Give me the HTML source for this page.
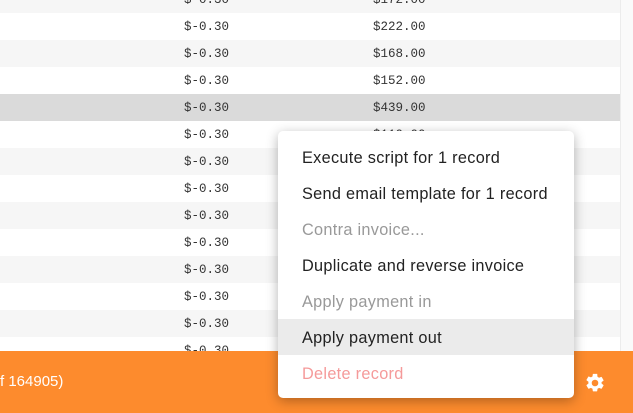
<!DOCTYPE html>
<html><head><style>
body{margin:0;width:633px;height:413px;overflow:hidden;position:relative;background:#fff;font-family:"Liberation Sans",sans-serif}
.strip{position:absolute;left:620px;top:0;width:13px;height:351px;background:#fafafa;border-left:1px solid #ececec}
.row{position:absolute;left:0;width:620px;height:27px;font-family:"Liberation Mono",monospace;font-size:12.5px;color:#333;line-height:29px}
.row span{position:absolute}
.a{left:184px}.b{left:373px}
.bar{position:absolute;left:0;top:351px;width:633px;height:62px;background:#fd8b2d;color:#fff;font-size:15px}
.menu{position:absolute;left:278px;top:131px;width:296px;height:267px;background:#fff;border-radius:5px;box-shadow:0 3px 12px rgba(0,0,0,.3)}
.it{position:absolute;left:0;width:296px;height:36px;line-height:38px;padding-left:24px;box-sizing:border-box;font-size:16.3px;letter-spacing:.3px;color:#222}
.dis{color:#999}
</style></head><body>
<div class="strip"></div>
<div class="row" style="top:-14px;background:#f6f6f6"><span class="a">$-0.30</span><span class="b">$172.00</span></div>
<div class="row" style="top:13px"><span class="a">$-0.30</span><span class="b">$222.00</span></div>
<div class="row" style="top:40px;background:#f6f6f6"><span class="a">$-0.30</span><span class="b">$168.00</span></div>
<div class="row" style="top:67px"><span class="a">$-0.30</span><span class="b">$152.00</span></div>
<div class="row" style="top:94px;background:#dadada"><span class="a">$-0.30</span><span class="b">$439.00</span></div>
<div class="row" style="top:121px"><span class="a">$-0.30</span><span class="b">$110.00</span></div>
<div class="row" style="top:148px;background:#f6f6f6"><span class="a">$-0.30</span></div>
<div class="row" style="top:175px"><span class="a">$-0.30</span></div>
<div class="row" style="top:202px;background:#f6f6f6"><span class="a">$-0.30</span></div>
<div class="row" style="top:229px"><span class="a">$-0.30</span></div>
<div class="row" style="top:256px;background:#f6f6f6"><span class="a">$-0.30</span></div>
<div class="row" style="top:283px"><span class="a">$-0.30</span></div>
<div class="row" style="top:310px;background:#f6f6f6"><span class="a">$-0.30</span></div>
<div class="row" style="top:337px"><span class="a">$-0.30</span></div>
<div class="bar"><span style="position:absolute;left:0;top:22px">f 164905)</span>
<svg style="position:absolute;left:584px;top:21px" width="22" height="22" viewBox="0 0 24 24"><path fill="#fff" d="M19.14 12.94c.04-.3.06-.61.06-.94s-.02-.64-.07-.94l2.030-1.58a.49.49 0 0 0 .12-.61l-1.92-3.32a.49.49 0 0 0-.59-.22l-2.39.96c-.5-.38-1.03-.7-1.62-.94l-.36-2.54A.48.48 0 0 0 13.92 2h-3.840c-.24 0-.43.17-.47.41l-.36 2.54c-.59.24-1.13.57-1.62.94l-2.39-.96a.48.48 0 0 0-.59.22L2.74 8.47c-.12.21-.08.47.12.61l2.03 1.58c-.05.3-.09.63-.09.94s.02.64.07.94l-2.03 1.58a.49.49 0 0 0-.12.61l1.92 3.32c.12.22.37.29.59.22l2.39-.96c.5.38 1.03.7 1.62.94l.36 2.54c.05.24.24.41.48.41h3.84c.24 0 .44-.17.47-.41l.36-2.54c.59-.24 1.13-.56 1.62-.94l2.39.96c.22.08.47 0 .59-.22l1.92-3.32c.12-.22.07-.47-.12-.61l-2.01-1.58zM12 15.6A3.6 3.6 0 1 1 12 8.4a3.6 3.6 0 0 1 0 7.2z"/></svg>
</div>
<div class="menu">
<div class="it" style="top:8px">Execute script for 1 record</div>
<div class="it" style="top:44px">Send email template for 1 record</div>
<div class="it dis" style="top:80px">Contra invoice...</div>
<div class="it" style="top:116px">Duplicate and reverse invoice</div>
<div class="it dis" style="top:152px">Apply payment in</div>
<div class="it" style="top:188px;background:#ebebeb">Apply payment out</div>
<div class="it" style="top:224px;color:#f59a9a">Delete record</div>
</div>
</body></html>
